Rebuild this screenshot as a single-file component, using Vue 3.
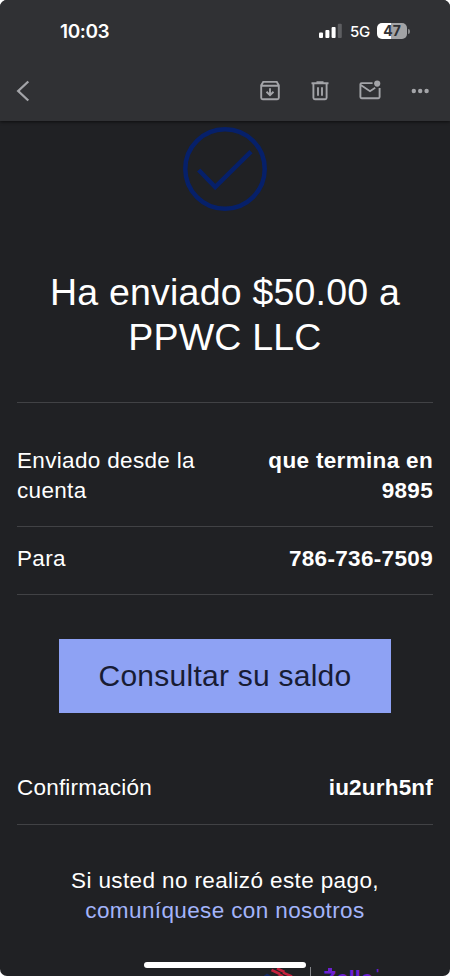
<!--
  App.vue - detalle de un correo de confirmación de pago (tema oscuro)
-->
<template>
  <div class="screen">
    <header class="header">
      <div class="status-bar">
        <span class="time">10:03</span>
        <div class="status-right">
          <svg class="signal" width="24" height="16" viewBox="0 0 24 16">
            <rect x="0" y="9.5" width="4" height="5.5" rx="1" fill="#fff" />
            <rect x="6.4" y="7" width="4" height="8" rx="1" fill="#fff" />
            <rect x="12.6" y="4" width="4" height="11" rx="1" fill="#fff" />
            <rect x="18.8" y="0.8" width="4" height="14.2" rx="1" fill="#5d5e61" />
          </svg>
          <span class="network">5G</span>
          <div class="battery">
            <span class="battery-level">{{ battery }}</span>
          </div>
          <i class="battery-cap"></i>
        </div>
      </div>

      <nav class="toolbar">
        <svg class="back" width="14" height="22" viewBox="0 0 14 22">
          <path d="M12.3 1.5 2.2 11l10.1 9.5" />
        </svg>
        <div class="actions">
          <svg width="22" height="22" viewBox="0 0 22 22">
            <path d="M2.2 5.2 4.2 1.9h13.6l2 3.3v12.6a1.5 1.5 0 0 1-1.5 1.5H3.7a1.5 1.5 0 0 1-1.5-1.5zM2.2 5.7h17.6M11 8.2v6.6M7.5 11.8l3.5 3.4 3.5-3.4" />
          </svg>
          <svg width="22" height="22" viewBox="0 0 22 22">
            <path d="M2.5 3.3h17M7.5 2.3h7M4.4 3.3v14.5a1.5 1.5 0 0 0 1.5 1.5h10.2a1.5 1.5 0 0 0 1.5-1.5V3.3M9 7.2v8.6M13 7.2v8.6" />
          </svg>
          <svg width="22" height="22" viewBox="0 0 22 22">
            <path d="M13.6 3.1H2.6a1.2 1.2 0 0 0-1.2 1.2v12.8a1.2 1.2 0 0 0 1.2 1.2h16.8a1.2 1.2 0 0 0 1.2-1.2V8M1.8 5l9.2 6.2 5.2-3.5" />
            <circle class="dot" cx="18.2" cy="3.6" r="3.1" />
          </svg>
          <svg width="22" height="22" viewBox="0 0 22 22">
            <circle class="dot" cx="4.8" cy="11" r="2.2" />
            <circle class="dot" cx="11.2" cy="11" r="2.2" />
            <circle class="dot" cx="17.6" cy="11" r="2.2" />
          </svg>
        </div>
      </nav>
    </header>

    <main class="mail">
      <svg class="check" width="86" height="86" viewBox="0 0 86 86">
        <circle cx="43" cy="43" r="39.7" />
        <path d="M16.7 44 33.2 61 69 25.7" />
      </svg>

      <h1 class="title">Ha enviado $50.00 a<br />PPWC LLC</h1>

      <dl class="details">
        <div v-for="row in rows" :key="row.label" class="row">
          <dt>{{ row.label }}</dt>
          <dd>{{ row.value }}</dd>
        </div>
      </dl>

      <a class="button">Consultar su saldo</a>

      <dl class="confirmation">
        <dt>Confirmación</dt>
        <dd>iu2urh5nf</dd>
      </dl>

      <p class="notice">
        Si usted no realizó este pago,<br />
        <a class="link">comuníquese con nosotros</a>
      </p>

      <div class="brands">
        <svg width="36" height="20" viewBox="0 0 36 20">
          <path d="M0 9.5 4 6.6 9 9.5z" fill="#142a63" />
          <path d="M8.5 3 17 7M14 1.4 21.5 5M20 5.6 29 9.4M15 6.8 20 9.4" stroke="#c5203c" stroke-width="2.6" />
        </svg>
        <i class="divider"></i>
        <span class="zelle">Zelle<sup>'</sup></span>
      </div>
    </main>

    <div class="home-indicator"></div>
  </div>
</template>

<script setup>
import { ref } from 'vue'

const battery = ref(47)

const rows = [
  { label: 'Enviado desde la cuenta', value: 'que termina en 9895' },
  { label: 'Para', value: '786-736-7509' }
]
</script>

<style>
body {
  margin: 0;
  background: #fff;
}
</style>

<style scoped>
.screen {
  position: relative;
  display: flex;
  flex-direction: column;
  width: 450px;
  height: 976px;
  overflow: hidden;
  border-radius: 7px;
  background: #202124;
  color: #fff;
  font-family: "Liberation Sans", Arial, sans-serif;
}

/* cabecera */
.header {
  flex: none;
  height: 121px;
  background: #303134;
  box-shadow: 0 1px 3px rgba(0, 0, 0, 0.6);
}
.status-bar {
  display: flex;
  justify-content: space-between;
  align-items: center;
  height: 62px;
  padding: 0 40px 0 60px;
  font-family: Inter, "Liberation Sans", sans-serif;
}
.time {
  font-size: 19px;
  font-weight: 600;
  letter-spacing: -0.4px;
}
.status-right {
  display: flex;
  align-items: center;
}
.network {
  margin-left: 7px;
  font-size: 15px;
  font-weight: 500;
  letter-spacing: -0.2px;
}
.battery {
  width: 30px;
  height: 16px;
  margin-left: 7px;
  border-radius: 5px;
  background: linear-gradient(90deg, #fff 47%, #a2a3a5 47%);
  color: #303134;
  font-size: 14px;
  font-weight: 700;
  line-height: 16px;
  text-align: center;
}
.battery-cap {
  width: 2px;
  height: 5px;
  margin-left: 1px;
  border-radius: 0 2px 2px 0;
  background: #88898b;
}
.toolbar {
  display: flex;
  justify-content: space-between;
  align-items: center;
  height: 58px;
  padding: 0 19px 0 16px;
}
.toolbar svg {
  fill: none;
  stroke: #a3a4a8;
  stroke-width: 1.9;
}
.toolbar .back {
  stroke-width: 2.3;
}
.toolbar .dot {
  fill: #a3a4a8;
  stroke: none;
}
.actions {
  display: flex;
  gap: 28px;
}

/* contenido del correo */
.mail {
  display: flex;
  flex-direction: column;
  align-items: center;
  padding: 5px 17px 0;
}
.check {
  flex: none;
  fill: none;
  stroke: #06206a;
  stroke-width: 4.5;
}
.title {
  margin: 58px 0 0;
  font-size: 37.5px;
  font-weight: 400;
  line-height: 45px;
  letter-spacing: 0.2px;
  text-align: center;
  white-space: nowrap;
}
.details {
  align-self: stretch;
  margin: 42px 0 0;
  border-top: 1px solid #414245;
}
.row {
  display: flex;
  justify-content: space-between;
  padding: 17px 0 20px;
  border-bottom: 1px solid #414245;
}
.row:first-child {
  padding-top: 43px;
}
dt,
dd {
  width: 185px;
  margin: 0;
  font-size: 22.5px;
  line-height: 30px;
  letter-spacing: 0.33px;
}
dd {
  font-weight: 700;
  text-align: right;
}
.button {
  width: 332px;
  height: 74px;
  margin-top: 44px;
  background: #8ea2f4;
  color: #181c34;
  font-size: 30px;
  line-height: 74px;
  letter-spacing: 0.25px;
  text-align: center;
}
.confirmation {
  display: flex;
  justify-content: space-between;
  align-self: stretch;
  margin: 60px 0 0;
  padding-bottom: 21px;
  border-bottom: 1px solid #414245;
}
.confirmation dt,
.confirmation dd {
  letter-spacing: 0.2px;
}
.notice {
  margin: 41px 0 0;
  font-size: 22.5px;
  line-height: 30px;
  letter-spacing: 0.38px;
  text-align: center;
}
.link {
  color: #a3b4fa;
}
.brands {
  display: flex;
  align-items: flex-start;
  align-self: flex-end;
  margin: 41px 51px 0 0;
}
.divider {
  width: 1px;
  height: 20px;
  margin: 0 12px 0 11px;
  background: #85868a;
}
.zelle {
  position: relative;
  width: 59px;
  color: #6c1fd0;
  font-size: 22px;
  font-weight: 700;
  line-height: 24px;
}
/* trazo vertical de la Z del logotipo */
.zelle::before {
  content: "";
  position: absolute;
  top: 1px;
  left: 5px;
  width: 4px;
  height: 4px;
  background: #6c1fd0;
}
.zelle sup {
  margin-left: 3px;
  font-size: 12px;
  line-height: 0;
}
.home-indicator {
  position: absolute;
  left: 144px;
  bottom: 8px;
  width: 162px;
  height: 6px;
  border-radius: 3px;
  background: #fff;
}
</style>
